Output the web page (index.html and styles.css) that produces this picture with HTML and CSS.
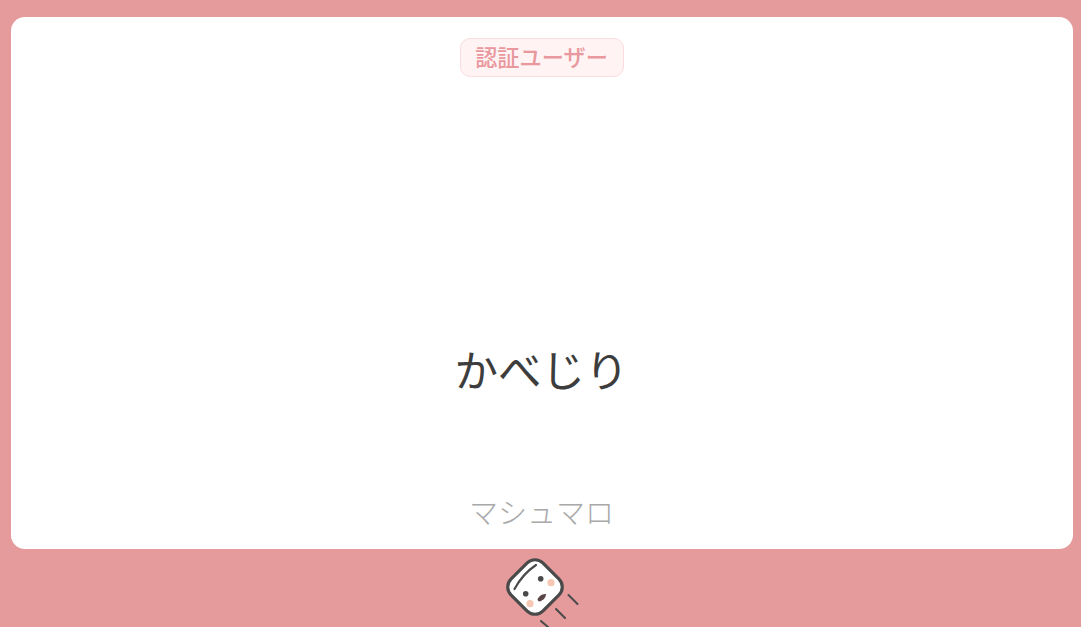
FILE: index.html
```html
<!DOCTYPE html>
<html lang="ja">

<head>
    <meta charset="UTF-8">
    <title>マシュマロ</title>
    <link rel="stylesheet" href="styles.css">
</head>

<body>
    <div class="card">
        <span class="badge"><span class="badge-text">認証ユーザー</span></span>
        <div class="message">かべじり</div>
        <div class="brand">マシュマロ</div>
    </div>
    <div class="logo">
        <svg width="85" height="78" viewBox="0 0 85 78">
            <g stroke="#4a4a4a" stroke-linecap="round" fill="none">
                <rect x="-22.5" y="-22.5" width="45" height="45" rx="11" transform="translate(34 38) rotate(45)" fill="#fff" stroke-width="3.2"/>
                <path d="M13.5 40C19 30 26 22 35 16" stroke-width="2.2"/>
                <path d="M67.5 46L76.5 55M55 60L64 69M40 72L47 78" stroke-width="2"/>
            </g>
            <circle cx="24.7" cy="44.7" r="2.8" fill="#4a4a4a"/>
            <circle cx="39.7" cy="29.7" r="2.8" fill="#4a4a4a"/>
            <path d="M36.5 51C37 47.5 41.5 44.5 45 45C45 48.5 42 52 38 52.5Z" fill="#5a4545"/>
            <circle cx="50" cy="33.7" r="3.6" fill="#f6c8b4"/>
            <circle cx="29" cy="54.7" r="3.6" fill="#f6c8b4"/>
        </svg>
    </div>
</body>

</html>
```

FILE: styles.css
```css
body {
    margin: 0;
    height: 627px;
    overflow: hidden;
    background-color: #e59a9b;
    font-family: "Noto Sans CJK JP", "Noto Sans", sans-serif;
    display: flex;
    flex-direction: column;
    align-items: center;
    padding-top: 17px;
    box-sizing: border-box;
}

.card {
    width: 1062px;
    height: 532px;
    flex-shrink: 0;
    margin-left: 2px;
    background-color: #fff;
    border-radius: 14px;
    display: flex;
    flex-direction: column;
    align-items: center;
}

.badge {
    margin-top: 21px;
    width: 164px;
    height: 39px;
    box-sizing: border-box;
    display: flex;
    align-items: center;
    justify-content: center;
    color: #e9989d;
    background-color: #fff3f4;
    border: 1px solid #fbdde0;
    border-radius: 10px;
}

.badge-text {
    font-size: 22.2px;
    line-height: 34px;
    font-weight: 500;
    margin-bottom: 3px;
}

.message {
    margin-top: 262px;
    font-size: 43.5px;
    line-height: 60px;
    color: #3d3d3d;
}

.brand {
    margin-top: 92px;
    font-size: 29px;
    font-weight: 300;
    line-height: 40px;
    color: #a9a9a9;
}

.logo {
    height: 78px;
    flex-shrink: 0;
    margin-left: 6px;
}
```
